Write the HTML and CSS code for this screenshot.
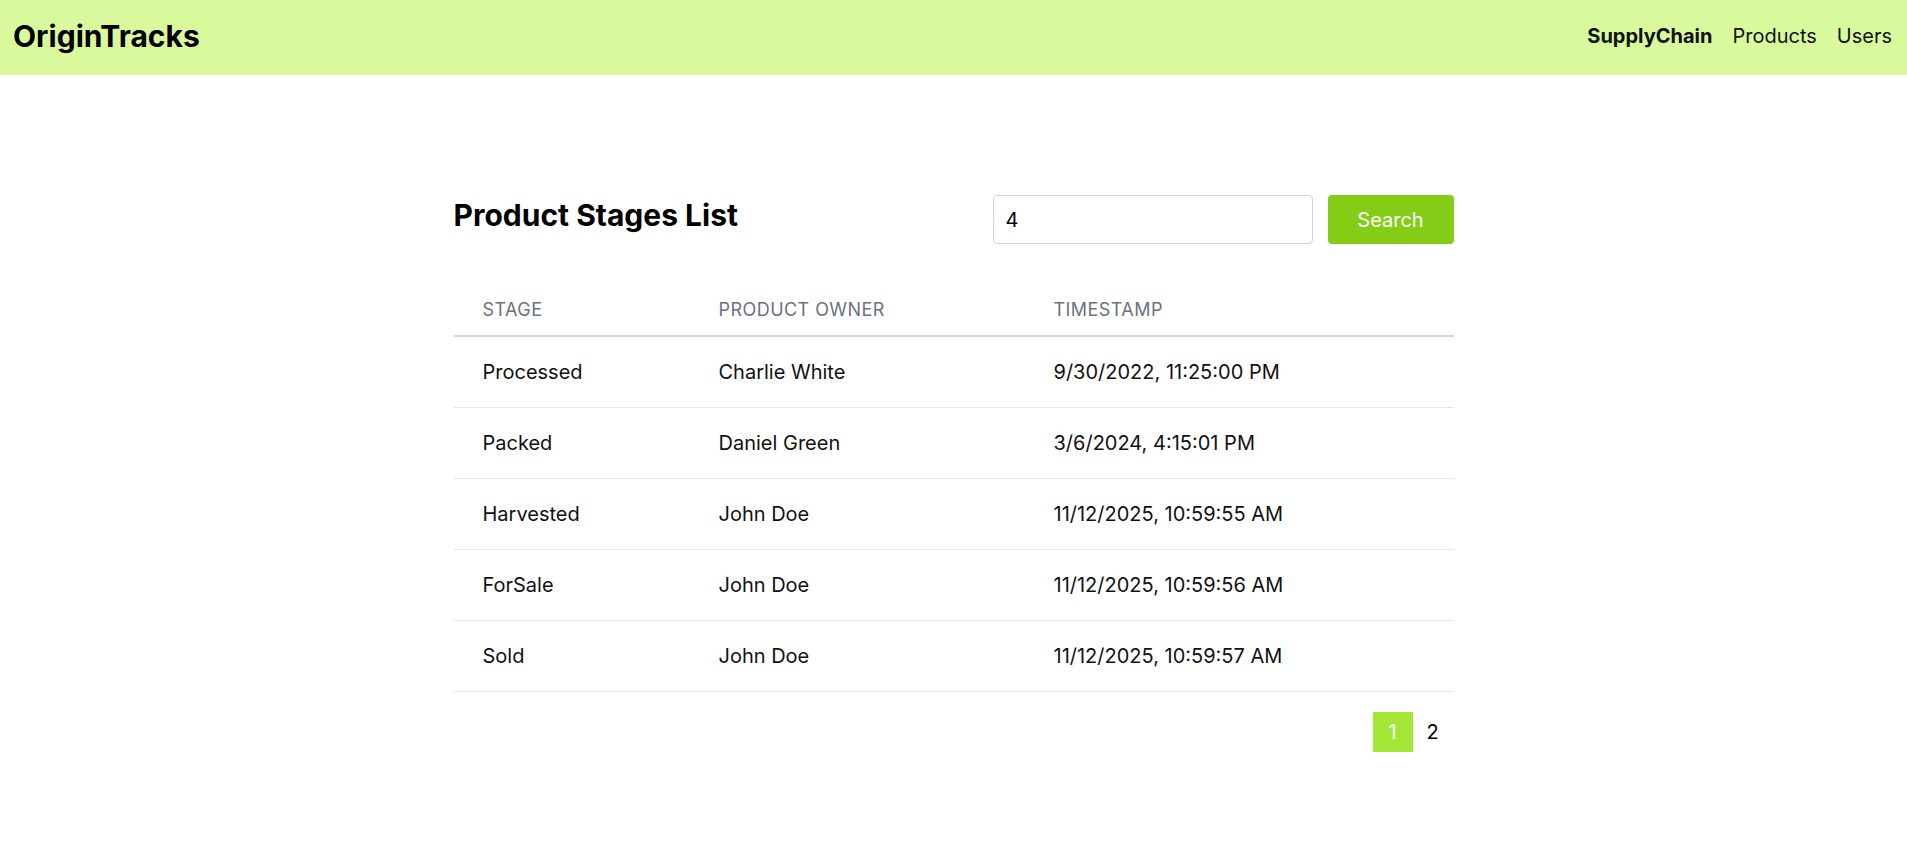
FILE: index.html
```html
<!DOCTYPE html>
<html lang="en">
<head>
<meta charset="utf-8">
<title>OriginTracks</title>
<link rel="stylesheet" href="styles.css">
</head>
<body>
<header class="topbar">
  <div class="logo">OriginTracks</div>
  <nav class="nav">
    <a class="nav-link active" href="#">SupplyChain</a>
    <a class="nav-link" href="#">Products</a>
    <a class="nav-link" href="#">Users</a>
  </nav>
</header>
<main class="container">
  <div class="toolbar">
    <h1 class="title">Product Stages List</h1>
    <form class="search">
      <input class="search-input" type="text" value="4">
      <button class="search-btn" type="button">Search</button>
    </form>
  </div>
  <table class="stages">
    <thead>
      <tr>
        <th class="col-stage">Stage</th>
        <th class="col-owner">Product Owner</th>
        <th>Timestamp</th>
      </tr>
    </thead>
    <tbody>
      <tr><td>Processed</td><td>Charlie White</td><td>9/30/2022, 11:25:00 PM</td></tr>
      <tr><td>Packed</td><td>Daniel Green</td><td>3/6/2024, 4:15:01 PM</td></tr>
      <tr><td>Harvested</td><td>John Doe</td><td>11/12/2025, 10:59:55 AM</td></tr>
      <tr><td>ForSale</td><td>John Doe</td><td>11/12/2025, 10:59:56 AM</td></tr>
      <tr><td>Sold</td><td>John Doe</td><td>11/12/2025, 10:59:57 AM</td></tr>
    </tbody>
  </table>
  <div class="pager">
    <button class="page current" type="button">1</button>
    <button class="page" type="button">2</button>
  </div>
</main>
</body>
</html>
```

FILE: styles.css
```css
* { box-sizing: border-box; }
body {
  margin: 0;
  font-family: Inter, "Noto Sans", sans-serif;
  color: #111;
  background: #fff;
}
.topbar {
  height: 75px;
  background: #d9f99d;
  display: flex;
  align-items: center;
  justify-content: space-between;
  padding: 0 15px 3px 13px;
}
.logo {
  font-size: 30px;
  font-weight: 700;
  color: #000;
}
.nav {
  display: flex;
  gap: 20px;
}
.nav-link {
  font-size: 20px;
  color: #111;
  text-decoration: none;
}
.nav-link.active { font-weight: 700; }
.container {
  width: 1000px;
  margin: 0 auto;
  padding-top: 120px;
}
.toolbar {
  display: flex;
  justify-content: space-between;
  align-items: flex-start;
}
.title {
  margin: 0;
  padding-top: 2px;
  font-size: 30px;
  line-height: 36px;
  font-weight: 700;
  color: #000;
}
.search {
  display: flex;
  gap: 15px;
}
.search-input {
  width: 320px;
  height: 49px;
  border: 1px solid #d1d5db;
  border-radius: 4px;
  padding: 0 12px;
  font: inherit;
  font-size: 20px;
  color: #000;
}
.search-btn {
  width: 126px;
  height: 49px;
  border: 0;
  border-radius: 4px;
  background: #84cc16;
  color: #fff;
  font: inherit;
  font-size: 20px;
}
.stages {
  width: 100%;
  border-collapse: collapse;
  margin-top: 42px;
}
.stages th {
  text-align: left;
  font-size: 18px;
  font-weight: 400;
  line-height: 24px;
  text-transform: uppercase;
  letter-spacing: 0.025em;
  color: #6b7280;
  padding: 12px 0 13px 29px;
  border-bottom: 2px solid #d1d5db;
}
.stages .col-stage { width: 236px; }
.stages .col-owner { width: 335px; }
.stages td {
  font-size: 20px;
  line-height: 28px;
  padding: 21px 0 21px 29px;
  border-bottom: 1px solid #e5e7eb;
  color: #111;
}
.pager {
  display: flex;
  justify-content: flex-end;
  margin-top: 20px;
  margin-right: 1px;
}
.page {
  width: 40px;
  height: 40px;
  border: 0;
  background: transparent;
  font: inherit;
  font-size: 20px;
  color: #000;
  padding: 0;
}
.page.current {
  background: #a3e635;
  color: #fff;
}
```
